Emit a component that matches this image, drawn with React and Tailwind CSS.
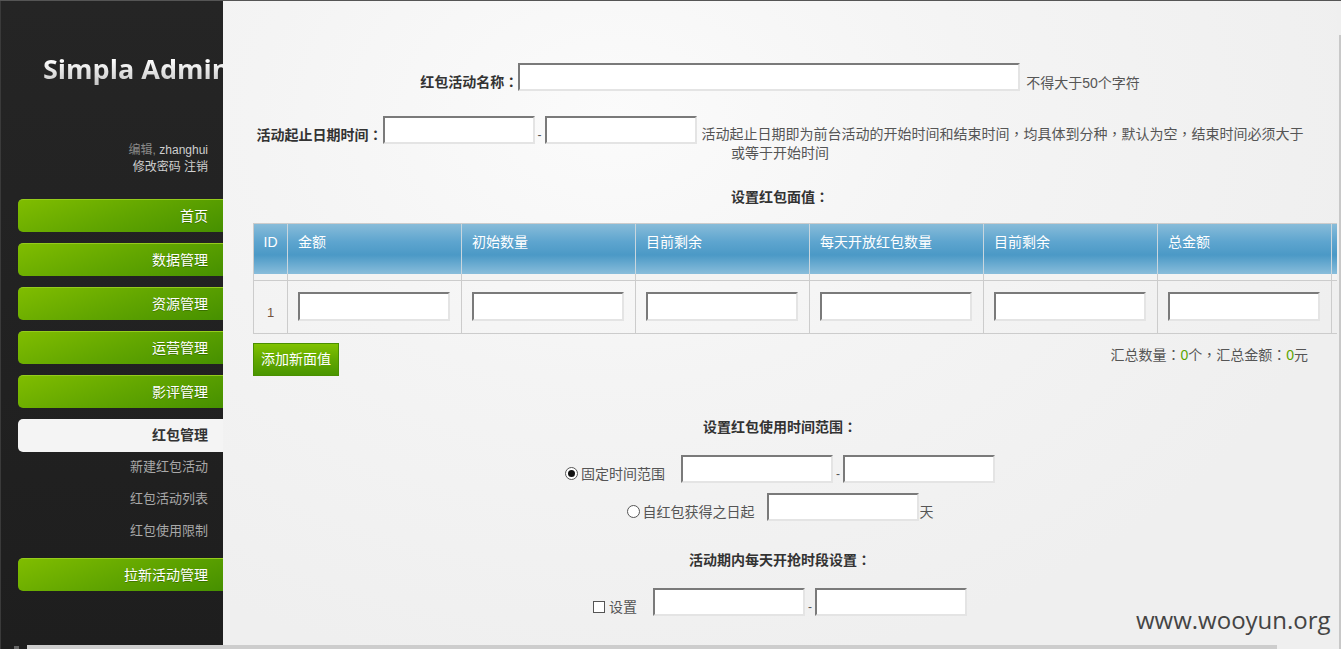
import React from "react";

const inputCls =
  "block bg-white border-2 border-[#e4e4e4] border-t-[#7a7a7a] border-l-[#7a7a7a] outline-none";

function TextInput({ w = "w-[152px]", h = "h-[28px]" }) {
  return <input type="text" className={`${inputCls} ${w} ${h}`} />;
}

function P({ children }) {
  return <span className="font-['Noto_Sans_CJK_TC',sans-serif] leading-[1px]">{children}</span>;
}

function NavButton({ children }) {
  return (
    <div className="h-[33px] ml-[17px] rounded-l-[5px] border-t border-[#95cc1c] bg-[linear-gradient(160deg,#80bd00_0%,#62a600_50%,#469000_100%)] flex items-center justify-end pr-[15px] text-[14px] text-white [text-shadow:0_1px_0_rgba(0,0,0,0.25)]">
      {children}
    </div>
  );
}

function Sidebar() {
  return (
    <div className="w-[223px] shrink-0 h-full bg-[linear-gradient(180deg,#252525_0%,#212121_60%,#1e1e1e_100%)] border-l border-[#3a3a3a] overflow-hidden flex flex-col">
      <div className="mt-[52px] pl-[42px] whitespace-nowrap text-[27px] leading-[32px] font-bold font-['Open_Sans','DejaVu_Sans',sans-serif] bg-[linear-gradient(180deg,#ffffff_20%,#c4c4c4_100%)] bg-clip-text text-transparent">
        Simpla Admin
      </div>
      <div className="mt-[57px] pr-[15px] text-right text-[12px] leading-[17px]">
        <div>
          <span className="text-[#8a8a8a]">编辑,</span>
          <span className="text-[#cfcfcf]"> zhanghui</span>
        </div>
        <div className="text-[#cfcfcf]">修改密码 注销</div>
      </div>
      <div className="mt-[23px] flex flex-col gap-[11px]">
        <NavButton>首页</NavButton>
        <NavButton>数据管理</NavButton>
        <NavButton>资源管理</NavButton>
        <NavButton>运营管理</NavButton>
        <NavButton>影评管理</NavButton>
      </div>
      <div className="mt-[11px] h-[33px] ml-[17px] rounded-l-[5px] bg-[#f4f4f4] flex items-center justify-end pr-[15px] text-[14px] font-bold text-[#333]">
        红包管理
      </div>
      <div className="mt-[-1px] pr-[15px] text-right text-[13px] leading-[32px] text-[#a8a8a8]">
        <div>新建红包活动</div>
        <div>红包活动列表</div>
        <div>红包使用限制</div>
      </div>
      <div className="mt-[11px]">
        <NavButton>拉新活动管理</NavButton>
      </div>
    </div>
  );
}

const cols = ["金额", "初始数量", "目前剩余", "每天开放红包数量", "目前剩余", "总金额"];

function Table() {
  return (
    <div className="ml-[30px] w-[1400px] border-t border-l border-[#cccccc] text-[14px]">
      <div className="flex h-[50px] bg-[linear-gradient(180deg,#88bcd9_0%,#5ea5cf_35%,#4b99c6_62%,#89bddb_100%)] text-white">
        <div className="w-[34px] shrink-0 border-r border-[#c9d6de] text-center pt-[8px] leading-[20px]">ID</div>
        {cols.map((c, i) => (
          <div key={i} className="w-[174px] shrink-0 border-r border-[#c9d6de] pl-[10px] pt-[8px] leading-[20px]">
            {c}
          </div>
        ))}
        <div className="w-[60px] shrink-0 border-r border-[#c9d6de]"></div>
      </div>
      <div className="flex h-[7px] border-b border-[#cccccc] bg-[#f3f3f3]">
        <div className="w-[34px] shrink-0 border-r border-[#cccccc]"></div>
        {cols.map((c, i) => (
          <div key={i} className="w-[174px] shrink-0 border-r border-[#cccccc]"></div>
        ))}
        <div className="w-[60px] shrink-0 border-r border-[#cccccc]"></div>
      </div>
      <div className="flex h-[53px] border-b border-[#cccccc]">
        <div className="w-[34px] shrink-0 border-r border-[#cccccc] flex items-end justify-center pb-[11px] text-[13px] leading-[18px] text-[#74533f]">
          1
        </div>
        {cols.map((c, i) => (
          <div key={i} className="w-[174px] shrink-0 border-r border-[#cccccc] pl-[10px] pt-[11px]">
            <TextInput h="h-[29px]" />
          </div>
        ))}
        <div className="w-[60px] shrink-0 border-r border-[#cccccc]"></div>
      </div>
    </div>
  );
}

function Radio({ checked }) {
  return (
    <span className="w-[13px] h-[13px] rounded-full border border-[#555] bg-white flex items-center justify-center mb-[3px]">
      {checked ? <span className="w-[7px] h-[7px] rounded-full bg-[#111]" /> : null}
    </span>
  );
}

function Main() {
  return (
    <div className="w-[1114px] shrink-0 h-full overflow-hidden bg-[radial-gradient(ellipse_at_35%_18%,#fbfbfb_0%,#f4f4f4_35%,#efefef_75%)] text-[14px] text-[#555]">
      {/* Row 1 */}
      <div className="mt-[62px] flex items-end justify-center leading-[18px]">
        <span className="font-bold text-[#333]">
          红包活动名称<P>：</P>
        </span>
        <input type="text" className={`${inputCls} w-[502px] h-[28px]`} />
        <span className="ml-[6px] mb-[-1px]">不得大于50个字符</span>
      </div>
      {/* Row 2 */}
      <div className="mt-[25px] flex items-end justify-center leading-[18px]">
        <span className="font-bold text-[#333]">
          活动起止日期时间<P>：</P>
        </span>
        <TextInput />
        <span className="w-[10px] text-center text-[12px]">-</span>
        <TextInput />
        <span className="ml-[5px] mb-[1px]">
          活动起止日期即为前台活动的开始时间和结束时间<P>，</P>均具体到分种<P>，</P>默认为空<P>，</P>结束时间必须大于
        </span>
      </div>
      <div className="text-center leading-[18px]">或等于开始时间</div>
      {/* heading */}
      <div className="mt-[26px] h-[18px] text-center font-bold text-[#333] leading-[18px]">
        设置红包面值<P>：</P>
      </div>
      <div className="mt-[17px]">
        <Table />
      </div>
      <div className="mt-[9px] ml-[30px] mr-[29px] flex justify-between items-start">
        <button className="h-[33px] w-[86px] border border-[#4a8f00] bg-[linear-gradient(180deg,#80c200_0%,#62a800_50%,#4a9600_100%)] text-white text-[14px]">
          添加新面值
        </button>
        <div className="pt-[3px] h-[21px] leading-[18px]">
          汇总数量<P>：</P>
          <span className="text-[#5aa500]">0</span>个<P>，</P>汇总金额<P>：</P>
          <span className="text-[#5aa500]">0</span>元
        </div>
      </div>
      <div className="mt-[42px] h-[18px] text-center font-bold text-[#333] leading-[18px]">
        设置红包使用时间范围<P>：</P>
      </div>
      <div className="mt-[19px] flex items-end justify-center leading-[18px]">
        <Radio checked />
        <span className="ml-[3px]">固定时间范围</span>
        <span className="w-[16px]" />
        <TextInput />
        <span className="w-[10px] text-center text-[12px]">-</span>
        <TextInput />
      </div>
      <div className="mt-[10px] flex items-end justify-center leading-[18px]">
        <Radio />
        <span className="ml-[3px]">自红包获得之日起</span>
        <span className="w-[12px]" />
        <TextInput />
        <span className="ml-[1px]">天</span>
      </div>
      <div className="mt-[30px] h-[18px] text-center font-bold text-[#333] leading-[18px]">
        活动期内每天开抢时段设置<P>：</P>
      </div>
      <div className="mt-[19px] flex items-end justify-center leading-[18px]">
        <span className="w-[12px] h-[12px] border border-[#555] bg-white mb-[3px]" />
        <span className="ml-[4px]">设置</span>
        <span className="w-[16px]" />
        <TextInput />
        <span className="w-[10px] text-center text-[12px]">-</span>
        <TextInput />
      </div>
    </div>
  );
}

export default function App() {
  return (
    <div className="relative w-[1341px] h-[649px] overflow-hidden border-t border-[#555] bg-[#efefef] flex font-['Liberation_Sans','Noto_Sans_CJK_SC',sans-serif]">
      <Sidebar />
      <Main />
      <div className="flex-1 bg-[#efefef]" />
      {/* scrollbars */}
      <div className="absolute right-0 top-[34px] bottom-0 w-[2px] bg-[#c8c8c8]" />
      <div className="absolute left-[27px] bottom-0 w-[1250px] h-[4px] bg-[#cdcdcd]" />
      <div className="absolute left-[14px] bottom-0 w-[5px] h-[3px] bg-[#666]" />
      {/* watermark */}
      <div className="absolute left-[1136px] top-[602px] text-[24px] leading-[34px] text-[#444] font-['Open_Sans','DejaVu_Sans',sans-serif]">
        www.wooyun.org
      </div>
    </div>
  );
}
